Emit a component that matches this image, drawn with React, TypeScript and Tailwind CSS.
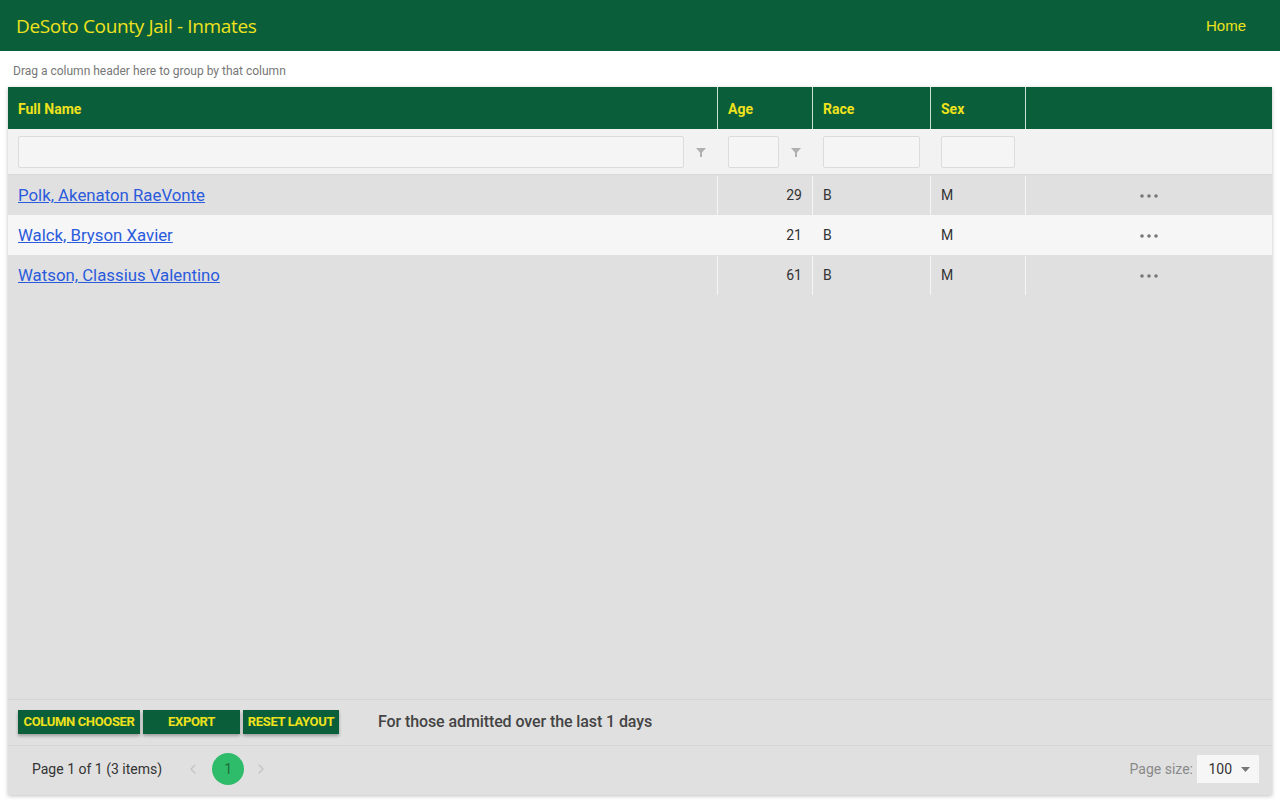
import { ChevronLeft, ChevronRight } from 'lucide-react';

const ROWS = [
  { name: 'Polk, Akenaton RaeVonte', age: 29, race: 'B', sex: 'M' },
  { name: 'Walck, Bryson Xavier', age: 21, race: 'B', sex: 'M' },
  { name: 'Watson, Classius Valentino', age: 61, race: 'B', sex: 'M' },
];

const FilterIcon = () => (
  <svg width="10" height="10" viewBox="0 0 10 10" className="shrink-0">
    <path d="M0 1h10L6 5.5V10H4V5.5z" fill="#b0b0b0" />
  </svg>
);

const Dots = () => (
  <svg width="18" height="4" viewBox="0 0 18 4">
    <circle cx="2" cy="2" r="1.8" fill="#777" />
    <circle cx="9" cy="2" r="1.8" fill="#777" />
    <circle cx="16" cy="2" r="1.8" fill="#777" />
  </svg>
);

export default function App() {
  return (
    <div className="w-[1280px] h-[800px] bg-white overflow-hidden font-['Roboto',sans-serif]">
      {/* header */}
      <div className="h-[51px] bg-[#0b5e3a] flex items-center justify-between px-4">
        <span className="text-[#eee21d] text-[19px] font-['Open_Sans',sans-serif] tracking-[-0.35px] pt-[1px]">DeSoto County Jail - Inmates</span>
        <span className="text-[#eee21d] text-[15px] font-['Liberation_Sans',sans-serif] mr-[18px] pt-[1px]">Home</span>
      </div>

      <div className="px-[13px] pt-[13px] h-[36px] text-[12px] leading-[14px] text-[#777]">Drag a column header here to group by that column</div>

      <div className="mx-2 h-[708px] flex flex-col bg-[#e0e0e0] shadow-[0_1px_4px_rgba(0,0,0,0.25)]">
        {/* column header */}
        <div className="flex h-[42px] bg-[#0b5e3a] text-[#eee21d] text-[14px] font-bold">
          <div className="w-[710px] px-[10px] pt-[2px] flex items-center border-r border-white/80">Full Name</div>
          <div className="w-[95px] px-[10px] pt-[2px] flex items-center border-r border-white/80">Age</div>
          <div className="w-[118px] px-[10px] pt-[2px] flex items-center border-r border-white/80">Race</div>
          <div className="w-[95px] px-[10px] pt-[2px] flex items-center border-r border-white/80">Sex</div>
          <div className="flex-1" />
        </div>

        {/* filter row */}
        <div className="flex h-[46px] bg-[#f2f2f2] border-b border-[#d8d8d8]">
          <div className="w-[710px] flex items-center pl-[10px] pr-[12px] gap-[12px]">
            <div className="flex-1 h-[32px] bg-[#f5f5f5] border border-[#dcdcdc] rounded-[2px]" />
            <FilterIcon />
          </div>
          <div className="w-[95px] flex items-center pl-[10px] pr-[12px] gap-[12px]">
            <div className="flex-1 h-[32px] bg-[#f5f5f5] border border-[#dcdcdc] rounded-[2px]" />
            <FilterIcon />
          </div>
          <div className="w-[118px] flex items-center px-[10px]">
            <div className="w-[97px] h-[32px] bg-[#f5f5f5] border border-[#dcdcdc] rounded-[2px]" />
          </div>
          <div className="w-[95px] flex items-center px-[10px]">
            <div className="w-[74px] h-[32px] bg-[#f5f5f5] border border-[#dcdcdc] rounded-[2px]" />
          </div>
          <div className="flex-1" />
        </div>

        {/* rows */}
        {ROWS.map((r, i) => (
          <div key={r.name} className={`flex h-[40px] text-[14px] text-[#333] pt-[1px] ${i % 2 === 1 ? 'bg-[#f6f6f6]' : 'bg-[#e0e0e0]'}`}>
            <div className="w-[710px] px-[10px] flex items-center border-r border-[#f6f6f6]">
              <a href="#" className="text-[#2a5bdc] underline text-[16.8px]">{r.name}</a>
            </div>
            <div className="w-[95px] px-[10px] flex items-center justify-end border-r border-[#f6f6f6]">{r.age}</div>
            <div className="w-[118px] px-[10px] flex items-center border-r border-[#f6f6f6]">{r.race}</div>
            <div className="w-[95px] px-[10px] flex items-center border-r border-[#f6f6f6]">{r.sex}</div>
            <div className="flex-1 flex items-center justify-center">
              <Dots />
            </div>
          </div>
        ))}

        <div className="flex-1" />

        {/* toolbar */}
        <div className="h-[46px] pb-[2px] border-t border-[#d6d6d6] flex items-center px-[10px] gap-[3px]">
          <button className="h-[24px] w-[122px] bg-[#0b5e3a] text-[#eee21d] text-[13px] font-bold tracking-[-0.35px] shadow-[0_2px_3px_rgba(0,0,0,0.3)]">COLUMN CHOOSER</button>
          <button className="h-[24px] w-[97px] bg-[#0b5e3a] text-[#eee21d] text-[13px] font-bold tracking-[-0.35px] shadow-[0_2px_3px_rgba(0,0,0,0.3)]">EXPORT</button>
          <button className="h-[24px] w-[96px] bg-[#0b5e3a] text-[#eee21d] text-[13px] font-bold tracking-[-0.35px] shadow-[0_2px_3px_rgba(0,0,0,0.3)]">RESET LAYOUT</button>
          <span className="ml-[36px] text-[16px] font-medium text-[#444] tracking-[-0.1px]">For those admitted over the last 1 days</span>
        </div>

        {/* pager */}
        <div className="h-[50px] pb-[3px] border-t border-[#d6d6d6] flex items-center pl-[24px] pr-[13px]">
          <span className="text-[14px] text-[#333]">Page 1 of 1 (3 items)</span>
          <ChevronLeft size={16} className="ml-[23px] text-[#c4c4c4]" />
          <div className="ml-[11px] w-[32px] h-[32px] rounded-full bg-[#2ebb6a] flex items-center justify-center text-[14px] text-[#1c6e3a]">1</div>
          <ChevronRight size={16} className="ml-[9px] text-[#c4c4c4]" />
          <div className="flex-1" />
          <span className="text-[14px] text-[#8a8a8a]">Page size:</span>
          <div className="ml-[4px] w-[62px] h-[28px] bg-[#f6f6f6] flex items-center justify-end pr-[9px] gap-[9px] text-[14px] text-[#333]">
            <span>100</span>
            <svg width="9" height="5" viewBox="0 0 9 5"><path d="M0 0h9L4.5 5z" fill="#777" /></svg>
          </div>
        </div>
      </div>
    </div>
  );
}
